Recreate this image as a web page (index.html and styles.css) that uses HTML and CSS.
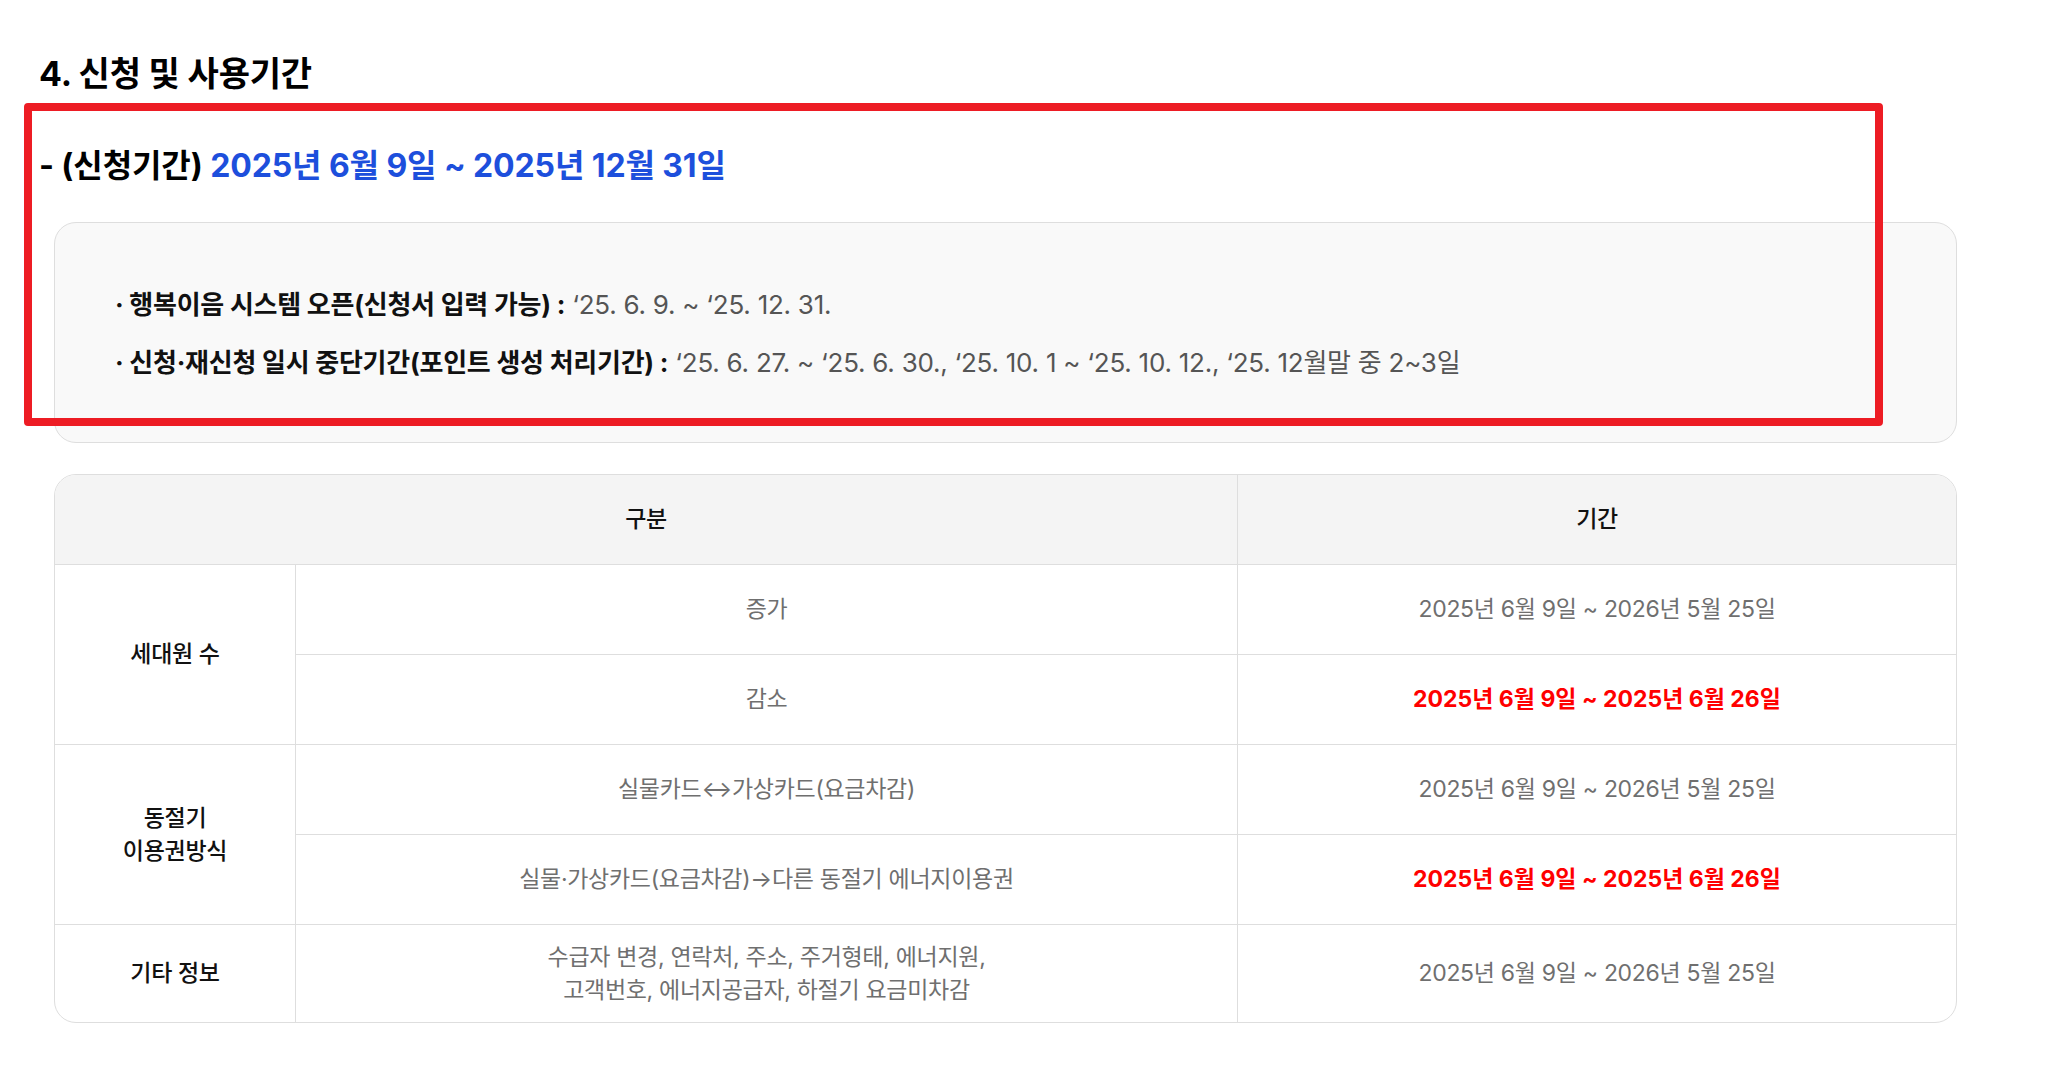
FILE: index.html
```html
<!DOCTYPE html>
<html lang="ko">
<head>
<meta charset="utf-8">
<title>신청 및 사용기간</title>
<link rel="stylesheet" href="styles.css">
</head>
<body>
<main class="page">
  <h2 class="title">4. 신청 및 사용기간</h2>
  <p class="period">- (신청기간) <span class="period-date">2025년 6월 9일 ~ 2025년 12월 31일</span></p>

  <div class="notice">
    <p class="notice-line"><strong>· 행복이음 시스템 오픈(신청서 입력 가능) :</strong> <span class="notice-val">‘25. 6. 9. ~ ‘25. 12. 31.</span></p>
    <p class="notice-line"><strong>· 신청·재신청 일시 중단기간(포인트 생성 처리기간) :</strong> <span class="notice-val">‘25. 6. 27. ~ ‘25. 6. 30., ‘25. 10. 1 ~ ‘25. 10. 12., ‘25. 12월말 중 2~3일</span></p>
  </div>

  <div class="table">
    <div class="cell head span-2">구분</div>
    <div class="cell head col-3">기간</div>

    <div class="cell cat rows-2">세대원 수</div>
    <div class="cell item">증가</div>
    <div class="cell item col-3">2025년 6월 9일 ~ 2026년 5월 25일</div>
    <div class="cell item">감소</div>
    <div class="cell item col-3 red">2025년 6월 9일 ~ 2025년 6월 26일</div>

    <div class="cell cat rows-2">동절기<br>이용권방식</div>
    <div class="cell item">실물카드↔가상카드(요금차감)</div>
    <div class="cell item col-3">2025년 6월 9일 ~ 2026년 5월 25일</div>
    <div class="cell item">실물·가상카드(요금차감)→다른 동절기 에너지이용권</div>
    <div class="cell item col-3 red">2025년 6월 9일 ~ 2025년 6월 26일</div>

    <div class="cell cat last">기타 정보</div>
    <div class="cell item last">수급자 변경, 연락처, 주소, 주거형태, 에너지원,<br>고객번호, 에너지공급자, 하절기 요금미차감</div>
    <div class="cell item col-3 last">2025년 6월 9일 ~ 2026년 5월 25일</div>
  </div>

  <div class="highlight" aria-hidden="true"></div>
</main>
</body>
</html>
```

FILE: styles.css
```css
* { box-sizing: border-box; }

html, body {
  margin: 0;
  padding: 0;
  background: #ffffff;
}

body {
  font-family: Inter, "Noto Sans CJK KR", "Noto Sans", sans-serif;
  color: #111;
}

.page {
  position: relative;
  padding: 53px 0 40px 39px;
  width: 2056px;
}

.title {
  margin: 0;
  font-size: 34px;
  line-height: 42px;
  font-weight: 700;
  color: #000;
  letter-spacing: -0.2px;
}

.period {
  margin: 51px 0 0;
  font-size: 32px;
  line-height: 40px;
  font-weight: 700;
  color: #000;
  letter-spacing: -0.1px;
}

.period-date {
  color: #1d4fdc;
}

.notice {
  margin: 36px 0 0 15px;
  width: 1903px;
  height: 221px;
  background: #f9f9f9;
  border: 1px solid #dedede;
  border-radius: 22px;
  padding: 64px 60px 0;
  display: flex;
  flex-direction: column;
  gap: 22px;
}

.notice-line {
  margin: 0;
  font-size: 26px;
  line-height: 36px;
  color: #111;
  letter-spacing: -0.25px;
}

.notice-line strong {
  font-weight: 700;
}

.notice-val {
  color: #555;
  font-weight: 400;
}

.table {
  margin: 31px 0 0 15px;
  width: 1903px;
  border: 1px solid #dedede;
  border-radius: 22px;
  overflow: hidden;
  display: grid;
  grid-template-columns: 240px 942px 719px;
  grid-template-rows: 90px 90px 90px 90px 90px 97px;
}

.cell {
  display: flex;
  align-items: center;
  justify-content: center;
  text-align: center;
  font-size: 23px;
  line-height: 33px;
  letter-spacing: -0.3px;
  border-bottom: 1px solid #dedede;
  border-left: 1px solid #dedede;
}

.head {
  background: #f4f4f4;
  color: #111;
  font-weight: 500;
  border-left: none;
}

.head.col-3 {
  border-left: 1px solid #dedede;
}

.span-2 { grid-column: 1 / span 2; }
.col-3 { grid-column: 3; }
.rows-2 { grid-row: span 2; }

.cat {
  grid-column: 1;
  border-left: none;
  color: #111;
  font-weight: 500;
}

.item {
  color: #6f6f6f;
  font-weight: 400;
}

.red {
  color: #ff0000;
  font-weight: 700;
  letter-spacing: 0;
}

.last {
  border-bottom: none;
}

.highlight {
  position: absolute;
  left: 24px;
  top: 103px;
  width: 1859px;
  height: 323px;
  border: 8px solid #ed1c24;
  border-radius: 4px;
  pointer-events: none;
}
```
